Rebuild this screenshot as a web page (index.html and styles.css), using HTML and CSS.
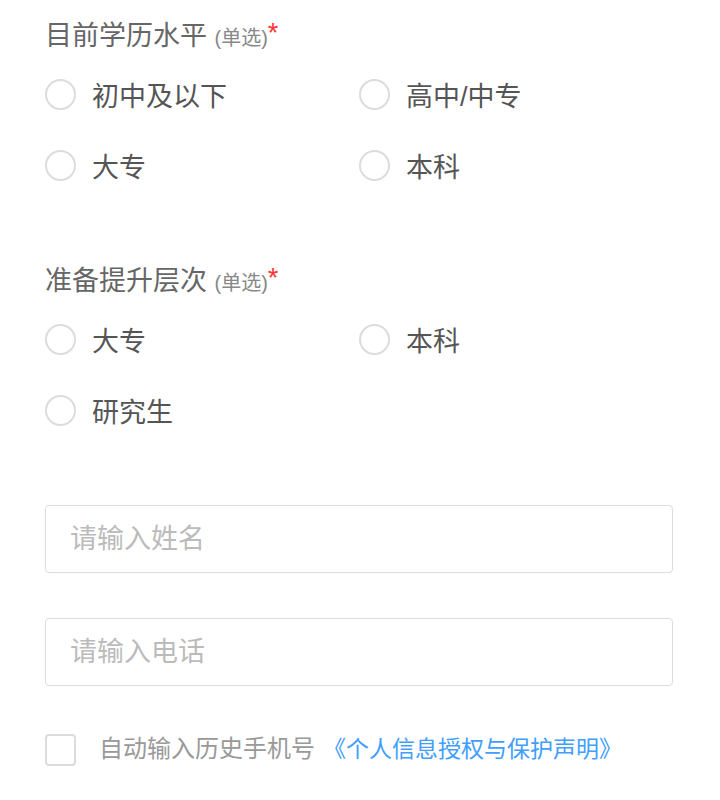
FILE: index.html
```html
<!DOCTYPE html>
<html lang="zh-CN">
<head>
  <meta charset="UTF-8">
  <meta name="viewport" content="width=device-width, initial-scale=1.0">
  <title>报名表单</title>
  <link rel="stylesheet" href="styles.css">
</head>
<body>
  <form class="signup-form">
    <!-- 目前学历 -->
    <section class="field">
      <h3 class="field-title">目前学历水平 <span class="hint">(单选)</span><span class="required">*</span></h3>
      <div class="options">
        <label class="option"><input type="radio" name="current"> <span>初中及以下</span></label>
        <label class="option"><input type="radio" name="current"> <span>高中/中专</span></label>
        <label class="option"><input type="radio" name="current"> <span>大专</span></label>
        <label class="option"><input type="radio" name="current"> <span>本科</span></label>
      </div>
    </section>

    <!-- 提升层次 -->
    <section class="field">
      <h3 class="field-title">准备提升层次 <span class="hint">(单选)</span><span class="required">*</span></h3>
      <div class="options">
        <label class="option"><input type="radio" name="target"> <span>大专</span></label>
        <label class="option"><input type="radio" name="target"> <span>本科</span></label>
        <label class="option"><input type="radio" name="target"> <span>研究生</span></label>
      </div>
    </section>

    <input class="text-input name-input" type="text" placeholder="请输入姓名">
    <input class="text-input phone-input" type="tel" placeholder="请输入电话">

    <label class="agree">
      <input type="checkbox">
      <span class="agree-text">自动输入历史手机号</span>
      <a class="agree-link" href="#">《个人信息授权与保护声明》</a>
    </label>
  </form>
</body>
</html>
```

FILE: styles.css
```css
/* Base */
body {
  margin: 0;
  background: #fff;
  font-family: "Liberation Sans", "Noto Sans CJK SC", sans-serif;
}

.signup-form {
  width: 628px;
  padding: 16px 0 0 45px;
}

/* Radio groups */
.field + .field {
  margin-top: 76px;
}

.field-title {
  margin: 0;
  height: 40px;
  line-height: 40px;
  font-size: 27px;
  font-weight: normal;
  color: #666;
}

.field-title .hint {
  font-size: 20px;
  color: #888;
}

.field-title .required {
  color: #f33;
  font-size: 27px;
  vertical-align: top;
  position: relative;
  top: -3px;
}

.options {
  display: grid;
  grid-template-columns: 314px 314px;
  row-gap: 31px;
  margin-top: 18px;
}

.option {
  display: flex;
  align-items: center;
  height: 40px;
  font-size: 27px;
  color: #555;
}

.option input {
  appearance: none;
  width: 31px;
  height: 31px;
  margin: 0 16px 0 0;
  border: 2px solid #dcdcdc;
  border-radius: 50%;
  box-sizing: border-box;
}

.option input:checked {
  border-color: #409eff;
  border-width: 9px;
}

/* Text inputs */
.text-input {
  display: block;
  width: 628px;
  height: 68px;
  box-sizing: border-box;
  padding: 0 24px;
  border: 1px solid #dcdcdc;
  border-radius: 4px;
  font-family: inherit;
  font-size: 27px;
  color: #555;
  outline: none;
}

.text-input::placeholder {
  color: #bbb;
}

.name-input {
  margin-top: 75px;
}

.phone-input {
  margin-top: 45px;
}

/* Agreement */
.agree {
  display: flex;
  align-items: center;
  margin-top: 47px;
  height: 32px;
  font-size: 24px;
  line-height: 1;
  padding-bottom: 2px;
}

.agree input {
  appearance: none;
  width: 31px;
  height: 32px;
  margin: 0 23px 0 0;
  border: 2px solid #dcdcdc;
  border-radius: 4px;
  box-sizing: border-box;
  position: relative;
  top: 1px;
}

.agree-text {
  color: #999;
}

.agree-link {
  margin-left: 8px;
  font-size: 23px;
  color: #409eff;
  text-decoration: none;
}
```
